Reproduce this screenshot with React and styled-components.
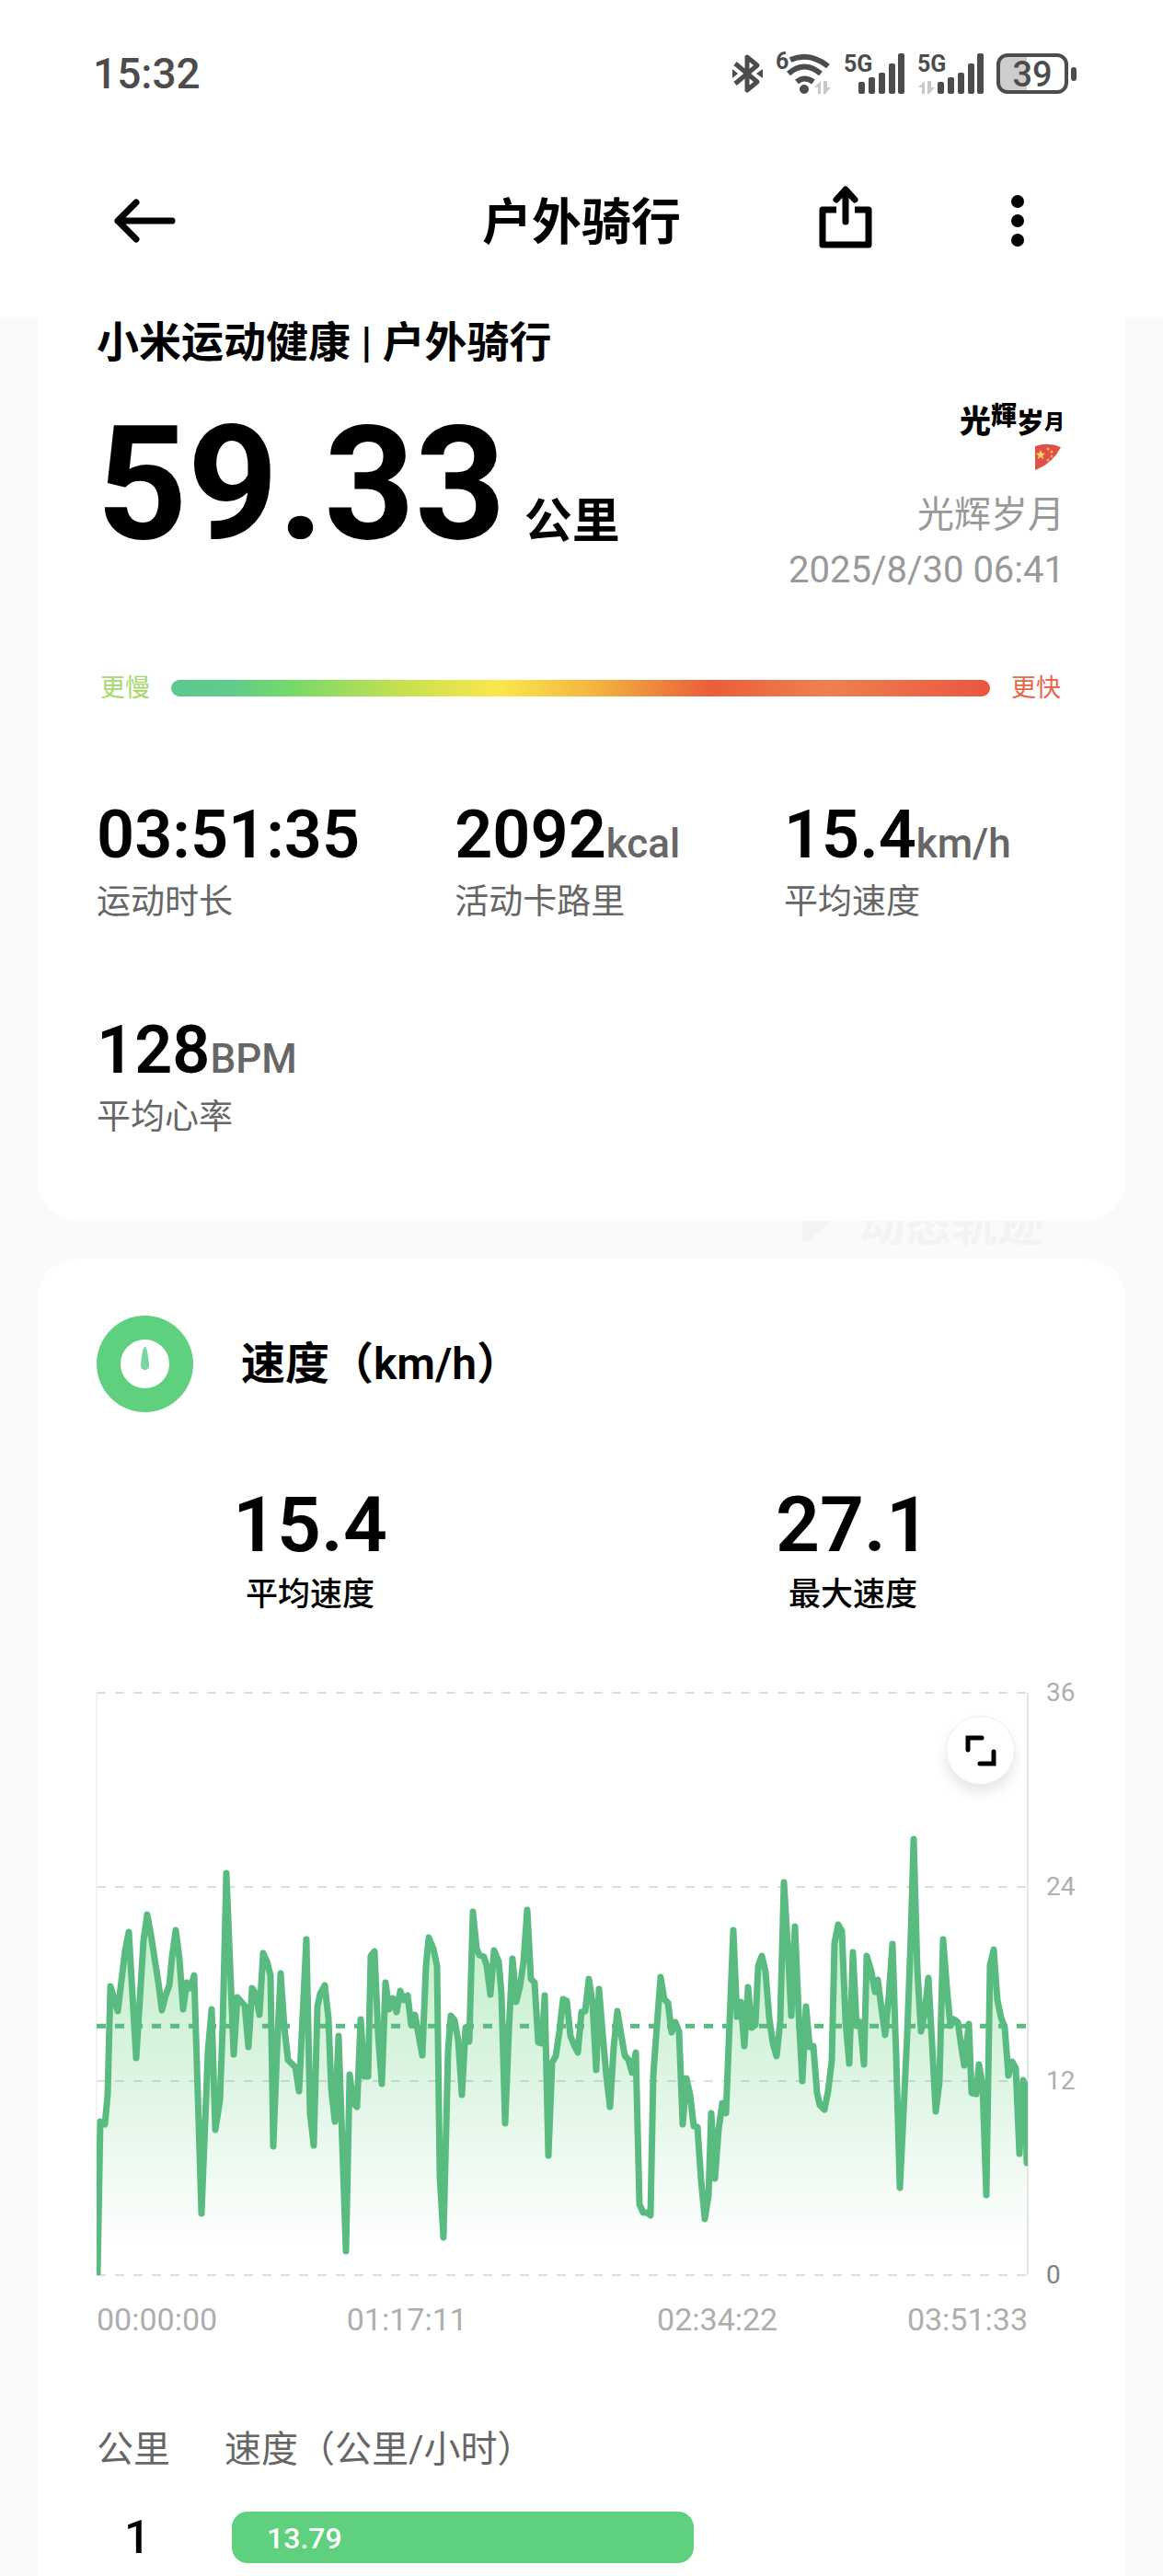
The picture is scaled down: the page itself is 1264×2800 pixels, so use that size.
import React from 'react'
import styled, { createGlobalStyle } from 'styled-components'

const GlobalStyle = createGlobalStyle`
  :root {
    --ink: #000;
    --status: #4c4c4c;
    --muted: #666;
    --faint: #999;
    --axis: #aeaeae;
    --green: #5fd07e;
    --sans: Roboto, 'Noto Sans CJK SC', sans-serif;
  }

  * {
    box-sizing: border-box;
  }

  body {
    margin: 0;
    background: #f9fafa;
    color: var(--ink);
    font-family: var(--sans);
  }

  h1, h2, p, dl, dd, dt {
    margin: 0;
    font-weight: inherit;
  }

  svg {
    display: block;
  }
`

const Page = styled.div`
  display: flex;
  flex-direction: column;
  min-height: 100vh;
`

const Top = styled.header`
  background: #fff;
  padding-bottom: 25px;
`

const StatusBar = styled.div`
  display: flex;
  align-items: center;
  justify-content: space-between;
  height: 160px;
  padding: 0 94px 0 101px;
  color: var(--status);
`

const Clock = styled.time`
  font-size: 46px;
  font-weight: 500;
  line-height: 60px;
`

const StatusIcons = styled.div`
  display: flex;
  align-items: center;
  gap: 14px;
`

const Nav = styled.nav`
  display: grid;
  grid-template-columns: 1fr auto 1fr;
  align-items: center;
  height: 160px;
  padding: 0 118px;
`

const NavTitle = styled.h1`
  padding-top: 6px;
  font-size: 54px;
  font-weight: 700;
  line-height: 64px;
`

const IconButton = styled.button`
  display: flex;
  align-items: center;
  justify-content: center;
  width: 80px;
  height: 80px;
  padding: 0;
  border: 0;
  background: none;
  color: var(--ink);
`

const NavActions = styled.div`
  display: flex;
  justify-content: flex-end;
  gap: 107px;
`

const Card = styled.section`
  margin: 0 42px;
  background: #fff;
  border-radius: ${({ $last }) => ($last ? '42px 42px 0 0' : '0 0 42px 42px')};
  padding: ${({ $last }) => ($last ? '62px 0 0' : '0 65px 89px 63px')};
  flex: ${({ $last }) => ($last ? '1' : 'none')};
`

const Heading = styled.h2`
  font-size: 46px;
  font-weight: 700;
  line-height: 54px;
`

const Summary = styled.div`
  display: flex;
  align-items: flex-start;
  justify-content: space-between;
`

const Distance = styled.p`
  display: flex;
  align-items: baseline;
  gap: 20px;
  margin-top: 37px;
  font-size: 172px;
  font-weight: 700;
  line-height: 180px;
`

const DistanceUnit = styled.span`
  font-size: 52px;
  line-height: 60px;
`

const Owner = styled.div`
  display: flex;
  flex-direction: column;
  align-items: flex-end;
  margin-top: 23px;
  color: var(--faint);
  font-size: 40px;
  line-height: 60px;
`

const Signature = styled.svg`
  margin-bottom: 18px;
`

const PaceScale = styled.div`
  display: flex;
  align-items: center;
  gap: 23px;
  margin-top: 80px;
  padding: 0 4px;
`

const PaceLabel = styled.span`
  color: ${({ $color }) => $color};
  font-size: 27px;
  line-height: 36px;
`

const PaceTrack = styled.div`
  flex: 1;
  height: 18px;
  border-radius: 9px;
  background: linear-gradient(
    90deg,
    #5bc98f 0%,
    #5fcb8c 7%,
    #72d96b 14%,
    #c5e04f 28%,
    #fbe74b 40%,
    #f3b33f 52%,
    #ea5d3b 66%,
    #ee8150 80%,
    #ea5640 100%
  );
`

const Stats = styled.dl`
  display: grid;
  grid-template-columns: 37fr 34fr 29fr;
  row-gap: 98px;
  margin-top: 102px;
`

const Stat = styled.div`
  display: flex;
  flex-direction: column-reverse;
`

const StatLabel = styled.dt`
  margin-top: 10px;
  color: var(--muted);
  font-size: 37px;
  line-height: 46px;
`

const StatValue = styled.dd`
  font-size: 72px;
  font-weight: 600;
  line-height: 80px;
`

const StatUnit = styled.span`
  color: var(--muted);
  font-size: 44px;
  font-weight: 500;
  line-height: 44px;
`

const Backdrop = styled.div`
  display: flex;
  align-items: flex-end;
  justify-content: flex-end;
  gap: 26px;
  height: 41px;
  padding: 0 130px 6px 0;
  overflow: hidden;
  color: #f2f3f3;
  font-size: 50px;
  font-weight: 700;
  line-height: 60px;
`

const SpeedHeader = styled.div`
  display: flex;
  align-items: center;
  gap: 52px;
  padding: 0 63px;
`

const SpeedTitle = styled.h2`
  font-size: 48px;
  font-weight: 600;
  line-height: 60px;
`

const Figures = styled.dl`
  display: grid;
  grid-template-columns: 1fr 1fr;
  margin-top: 75px;
  text-align: center;
`

const FigureValue = styled.dd`
  font-size: 84px;
  font-weight: 600;
  line-height: 96px;
`

const FigureLabel = styled.dt`
  margin-top: 6px;
  font-size: 35px;
  font-weight: 500;
  line-height: 44px;
`

const Chart = styled.div`
  display: flex;
  gap: 20px;
  margin-top: 84px;
  padding: 0 54px 0 63px;
`

const Plot = styled.div`
  position: relative;
  flex: 1;
`

const PlotSvg = styled.svg`
  width: 100%;
  height: 633px;
`

const ExpandButton = styled.button`
  position: absolute;
  top: 25px;
  right: 14px;
  display: flex;
  align-items: center;
  justify-content: center;
  width: 75px;
  height: 75px;
  padding: 0;
  border: 1px solid #eee;
  border-radius: 50%;
  background: #fff;
  box-shadow: 0 8px 14px rgba(0, 0, 0, 0.1);
  color: var(--ink);
`

const YAxis = styled.div`
  display: flex;
  flex-direction: column;
  justify-content: space-between;
  width: 31px;
  height: 665px;
  margin: -16px 0;
  color: var(--axis);
  font-size: 28px;
  line-height: 32px;

  span:last-child {
    color: #808080;
  }
`

const XAxis = styled.div`
  display: grid;
  grid-template-columns: 1fr 2fr 2fr 1fr;
  margin-top: 28px;
  padding: 0 105px 0 63px;
  color: var(--axis);
  font-size: 34px;
  line-height: 40px;
  text-align: center;

  span:first-child {
    text-align: left;
  }

  span:last-child {
    justify-self: end;
  }
`

const Splits = styled.table`
  width: calc(100% - 126px);
  margin: 94px 63px 0;
  border-collapse: collapse;
  text-align: left;

  th,
  td {
    padding: 0;
  }
`

const SplitHead = styled.th`
  width: ${({ $width }) => $width || 'auto'};
  color: var(--muted);
  font-size: 40px;
  font-weight: 400;
  line-height: 56px;
`

const SplitIndex = styled.td`
  font-size: 50px;
  font-weight: 500;
  line-height: 56px;

  && {
    padding: 39px 0 0 30px;
  }
`

const SplitCell = styled.td`
  && {
    padding: 39px 0 0 8px;
  }
`

const SplitBar = styled.div`
  height: 56px;
  padding-left: 38px;
  border-radius: 17px;
  background: var(--green);
  color: #fff;
  font-size: 32px;
  font-weight: 500;
  line-height: 58px;
`

const stats = [
  { value: '03:51:35', unit: '', label: '运动时长' },
  { value: '2092', unit: 'kcal', label: '活动卡路里' },
  { value: '15.4', unit: 'km/h', label: '平均速度' },
  { value: '128', unit: 'BPM', label: '平均心率' },
]

const figures = [
  { value: '15.4', label: '平均速度' },
  { value: '27.1', label: '最大速度' },
]

const splits = [{ km: 1, speed: 13.79 }]
const fastestSplit = 24.9

const PLOT_W = 1012
const PLOT_H = 633
const MAX_SPEED = 36
const AVERAGE = 15.4

const speedY = speed => PLOT_H - (speed / MAX_SPEED) * PLOT_H

// x,y pairs in plot units
const trace = `
1,633 4,466 9,469 12,437 15,319 23,346 31,280 35,260 43,397 51,269 55,241 59,263 67,314 71,345
75,329 79,318 82,287 86,258 90,289 94,344 98,315 102,321 106,307 114,566 121,390 125,344 129,475
134,443 137,363 141,196 149,393 153,331 161,340 165,385 169,321 173,327 177,350 181,283 185,292
189,307 192,493 196,390 200,305 204,363 208,399 216,407 220,433 228,268 232,457 236,492 240,341
243,327 248,318 252,354 255,430 259,466 263,373 271,607 275,415 279,446 283,450 287,355 291,417
295,417 298,286 302,281 306,372 310,425 314,315 318,344 322,332 326,347 330,324 334,334 338,329
342,361 346,350 354,394 358,296 361,266 366,278 370,297 373,526 377,592 382,389 385,351 389,356
393,378 397,437 401,364 405,379 409,238 413,278 416,285 421,287 424,297 428,328 432,280 437,292
440,327 444,468 448,368 452,289 456,336 460,320 464,292 468,236 472,311 476,315 480,380 484,381
487,329 491,503 495,402 499,395 503,368 507,333 511,335 515,373 519,383 523,391 527,347 531,346
535,311 539,337 543,410 546,322 550,371 554,416 558,450 562,385 566,346 570,371 574,394 578,399
582,413 586,391 590,556 594,565 598,565 602,568 605,416 609,361 613,309 617,333 621,337 625,369
629,358 633,368 637,469 641,419 645,437 649,471 653,472 657,530 661,572 665,547 668,457 672,528
676,475 680,446 684,457 692,258 696,352 700,336 704,384 708,320 712,364 716,361 719,297 723,286
727,303 731,353 735,381 739,395 743,357 747,206 751,272 755,351 759,254 763,348 767,422 771,341
775,385 779,384 783,435 786,448 791,453 795,433 799,400 802,272 806,252 810,259 814,357 818,403
822,282 826,362 830,358 834,404 837,286 842,303 846,325 849,312 853,343 857,372 861,329 865,273
869,395 873,538 877,456 881,371 885,263 888,159 892,301 896,368 900,348 904,310 908,381 912,455
916,423 920,268 924,320 928,362 932,355 936,358 940,386 943,405 948,360 951,435 956,436 959,404
963,428 967,546 971,296 975,279 979,334 983,353 987,364 991,416 995,401 999,408 1003,501 1007,421
1009,426 1011,511
`.trim()

const BluetoothIcon = () => (
  <svg width="33" height="44" viewBox="0 0 33 44" fill="none" stroke="currentColor">
    <path d="M3 11l24 20-11 9V4l11 9L3 33" strokeWidth="5" strokeLinejoin="round" />
    <path d="M0 17l6 5-6 5z" fill="currentColor" stroke="none" />
    <path d="M33 17l-7 5 7 5z" fill="currentColor" stroke="none" />
  </svg>
)

const DataArrows = ({ x, y }) => (
  <path
    transform={`translate(${x} ${y})`}
    d="M7 0v14H4V7H0zM10 0v14h2L18 7h-4V0z"
    fill="#c9c9c9"
    stroke="none"
  />
)

const WifiIcon = () => (
  <svg width="60" height="64" viewBox="0 -10 60 64" fill="none" stroke="currentColor">
    <text x="0" y="17" fill="currentColor" stroke="none" fontSize="25" fontWeight="700">6</text>
    <g strokeWidth="6">
      <path d="M16 7Q37 -2 57 14" />
      <path d="M14 22Q31 7 49 22" />
      <path d="M23 31Q31 24 41 31" />
    </g>
    <circle cx="31" cy="39" r="5" fill="currentColor" stroke="none" />
    <DataArrows x={42} y={30} />
  </svg>
)

const SignalIcon = ({ arrows }) => (
  <svg width={arrows ? 72 : 66} height="64" viewBox={`0 -10 ${arrows ? 72 : 66} 64`} fill="currentColor">
    <text x="0" y="20" fontSize="25" fontWeight="700">5G</text>
    {arrows && <DataArrows x={1} y={30} />}
    <g transform={`translate(${arrows ? 22 : 16} 0)`}>
      <rect x="0" y="31" width="7" height="13" rx="2" />
      <rect x="11" y="26" width="7" height="18" rx="2" />
      <rect x="22" y="21" width="7" height="23" rx="2" />
      <rect x="33" y="11" width="7" height="33" rx="2" />
      <rect x="43" y="0" width="7" height="44" rx="2" />
    </g>
  </svg>
)

const BatteryIcon = () => (
  <svg width="87" height="64" viewBox="0 -10 87 64">
    <path d="M12 2h21v40H12a10 10 0 0 1-10-10V12A10 10 0 0 1 12 2z" fill="#cdcdcd" />
    <rect x="2" y="2" width="74" height="40" rx="10" fill="none" stroke="currentColor" strokeWidth="4" />
    <rect x="81" y="15" width="6" height="15" rx="3" fill="currentColor" />
    <text x="39" y="36" fill="currentColor" fontSize="38" fontWeight="500" textAnchor="middle">39</text>
  </svg>
)

const BackIcon = () => (
  <svg width="68" height="48" viewBox="0 0 68 48" fill="none" stroke="currentColor" strokeWidth="7" strokeLinecap="round" strokeLinejoin="round">
    <path d="M24 4L4 24l20 20M4 24h59" />
  </svg>
)

const ShareIcon = () => (
  <svg width="58" height="76" viewBox="0 0 58 76" fill="none" stroke="currentColor" strokeWidth="7" strokeLinejoin="round">
    <path d="M19 26H4v38h50V26H39" />
    <path d="M29 39V6M19 15L29 4l10 11" strokeLinecap="round" />
  </svg>
)

const MoreIcon = () => (
  <svg width="16" height="58" viewBox="0 0 16 58" fill="currentColor">
    <circle cx="8" cy="8" r="7" />
    <circle cx="8" cy="29" r="7" />
    <circle cx="8" cy="50" r="7" />
  </svg>
)

const ExpandIcon = () => (
  <svg width="36" height="36" viewBox="0 0 36 36" fill="none" stroke="currentColor" strokeWidth="5" strokeLinecap="round">
    <path d="M4 17V4h15M32 19v13H17" />
  </svg>
)

const SpeedIcon = () => (
  <svg width="105" height="105" viewBox="0 0 105 105">
    <circle cx="52.5" cy="52.5" r="52.5" fill="#5fd07e" />
    <circle cx="52.5" cy="52.5" r="26.5" fill="#fff" />
    <path d="M52.5 34c2 0 3 6 4.500 18 .6 5-1.500 7-4.500 7s-5.100-2-4.500-7c1.500-12 2.500-18 4.500-18z" fill="#7ad6a0" />
  </svg>
)

const OwnerSignature = () => (
  <Signature width="114" height="90" viewBox="0 0 114 90" fontWeight="900" fill="#000">
    <text x="0" y="48" fontSize="34">光</text>
    <text x="34" y="40" fontSize="28">輝</text>
    <text x="62" y="48" fontSize="30">岁</text>
    <text x="92" y="44" fontSize="22">月</text>
    <path d="M82 63q14-5 28 1-9 18-28 25z" fill="#e0504b" />
    <path d="M88 67l1.500 3.500 3.500.3-2.700 2.400.9 3.800-3.200-2-3.200 2 .9-3.800-2.700-2.400 3.500-.3z" fill="#fbd35a" />
    <circle cx="96" cy="66" r="1.500" fill="#f6b057" />
    <circle cx="100" cy="69" r="1.500" fill="#f6b057" />
    <circle cx="100" cy="74" r="1.500" fill="#f6b057" />
    <circle cx="96" cy="78" r="1.500" fill="#f6b057" />
  </Signature>
)

const SpeedPlot = () => (
  <PlotSvg viewBox={`0 0 ${PLOT_W} ${PLOT_H}`} preserveAspectRatio="none" fill="none" overflow="visible">
    <defs>
      <linearGradient id="speedFill" gradientUnits="userSpaceOnUse" x1="0" y1="159" x2="0" y2="600">
        <stop offset="0" stopColor="#b2ecbb" />
        <stop offset="0.55" stopColor="#daf4e0" />
        <stop offset="1" stopColor="#fff" />
      </linearGradient>
      <clipPath id="plotArea">
        <rect width={PLOT_W} height={PLOT_H} />
      </clipPath>
    </defs>
    <g clipPath="url(#plotArea)">
      <polygon points={`${trace} ${PLOT_W},${PLOT_H}`} fill="url(#speedFill)" />
    </g>
    <g stroke="#000" strokeOpacity="0.13" strokeWidth="2" strokeDasharray="10 10">
      {[36, 24, 12, 0].map(speed => (
        <line key={speed} x1="0" x2={PLOT_W} y1={speedY(speed)} y2={speedY(speed)} />
      ))}
    </g>
    <path d={`M0 0V${PLOT_H}`} stroke="#e8e8e8" />
    <path d={`M${PLOT_W} 0V${PLOT_H}`} stroke="#e4e4e4" strokeWidth="2" />
    <g clipPath="url(#plotArea)" stroke="#59bb80">
      <line x1="0" x2={PLOT_W} y1={speedY(AVERAGE)} y2={speedY(AVERAGE)} strokeWidth="5" strokeDasharray="10 10" />
      <polyline points={trace} strokeWidth="7" strokeLinejoin="round" strokeLinecap="round" />
    </g>
  </PlotSvg>
)

const App = () => (
  <Page>
    <GlobalStyle />
    <Top>
      <StatusBar>
        <Clock>15:32</Clock>
        <StatusIcons>
          <BluetoothIcon />
          <WifiIcon />
          <SignalIcon />
          <SignalIcon arrows />
          <BatteryIcon />
        </StatusIcons>
      </StatusBar>
      <Nav>
        <IconButton aria-label="返回">
          <BackIcon />
        </IconButton>
        <NavTitle>户外骑行</NavTitle>
        <NavActions>
          <IconButton aria-label="分享">
            <ShareIcon />
          </IconButton>
          <IconButton aria-label="更多">
            <MoreIcon />
          </IconButton>
        </NavActions>
      </Nav>
    </Top>

    <Card>
      <Heading>小米运动健康 | 户外骑行</Heading>
      <Summary>
        <Distance>
          59.33
          <DistanceUnit>公里</DistanceUnit>
        </Distance>
        <Owner>
          <OwnerSignature />
          <p>光辉岁月</p>
          <p>2025/8/30 06:41</p>
        </Owner>
      </Summary>
      <PaceScale>
        <PaceLabel $color="#a5d96c">更慢</PaceLabel>
        <PaceTrack />
        <PaceLabel $color="#e8664a">更快</PaceLabel>
      </PaceScale>
      <Stats>
        {stats.map(({ value, unit, label }) => (
          <Stat key={label}>
            <StatLabel>{label}</StatLabel>
            <StatValue>
              {value}
              {unit && <StatUnit>{unit}</StatUnit>}
            </StatValue>
          </Stat>
        ))}
      </Stats>
    </Card>

    <Backdrop aria-hidden="true">
      <svg width="40" height="46" viewBox="0 0 40 46" fill="currentColor">
        <path d="M4 0h34v8L12 32q-8 5-8-4z" />
      </svg>
      动态轨迹
    </Backdrop>

    <Card $last>
      <SpeedHeader>
        <SpeedIcon />
        <SpeedTitle>速度（km/h）</SpeedTitle>
      </SpeedHeader>
      <Figures>
        {figures.map(({ value, label }) => (
          <Stat key={label}>
            <FigureLabel>{label}</FigureLabel>
            <FigureValue>{value}</FigureValue>
          </Stat>
        ))}
      </Figures>
      <Chart>
        <Plot>
          <SpeedPlot />
          <ExpandButton aria-label="全屏">
            <ExpandIcon />
          </ExpandButton>
        </Plot>
        <YAxis>
          <span>36</span>
          <span>24</span>
          <span>12</span>
          <span>0</span>
        </YAxis>
      </Chart>
      <XAxis>
        <span>00:00:00</span>
        <span>01:17:11</span>
        <span>02:34:22</span>
        <span>03:51:33</span>
      </XAxis>
      <Splits>
        <thead>
          <tr>
            <SplitHead $width="139px">公里</SplitHead>
            <SplitHead>速度（公里/小时）</SplitHead>
          </tr>
        </thead>
        <tbody>
          {splits.map(({ km, speed }) => (
            <tr key={km}>
              <SplitIndex>{km}</SplitIndex>
              <SplitCell>
                <SplitBar style={{ width: `${(speed / fastestSplit) * 100}%` }}>{speed}</SplitBar>
              </SplitCell>
            </tr>
          ))}
        </tbody>
      </Splits>
    </Card>
  </Page>
)

export default App
